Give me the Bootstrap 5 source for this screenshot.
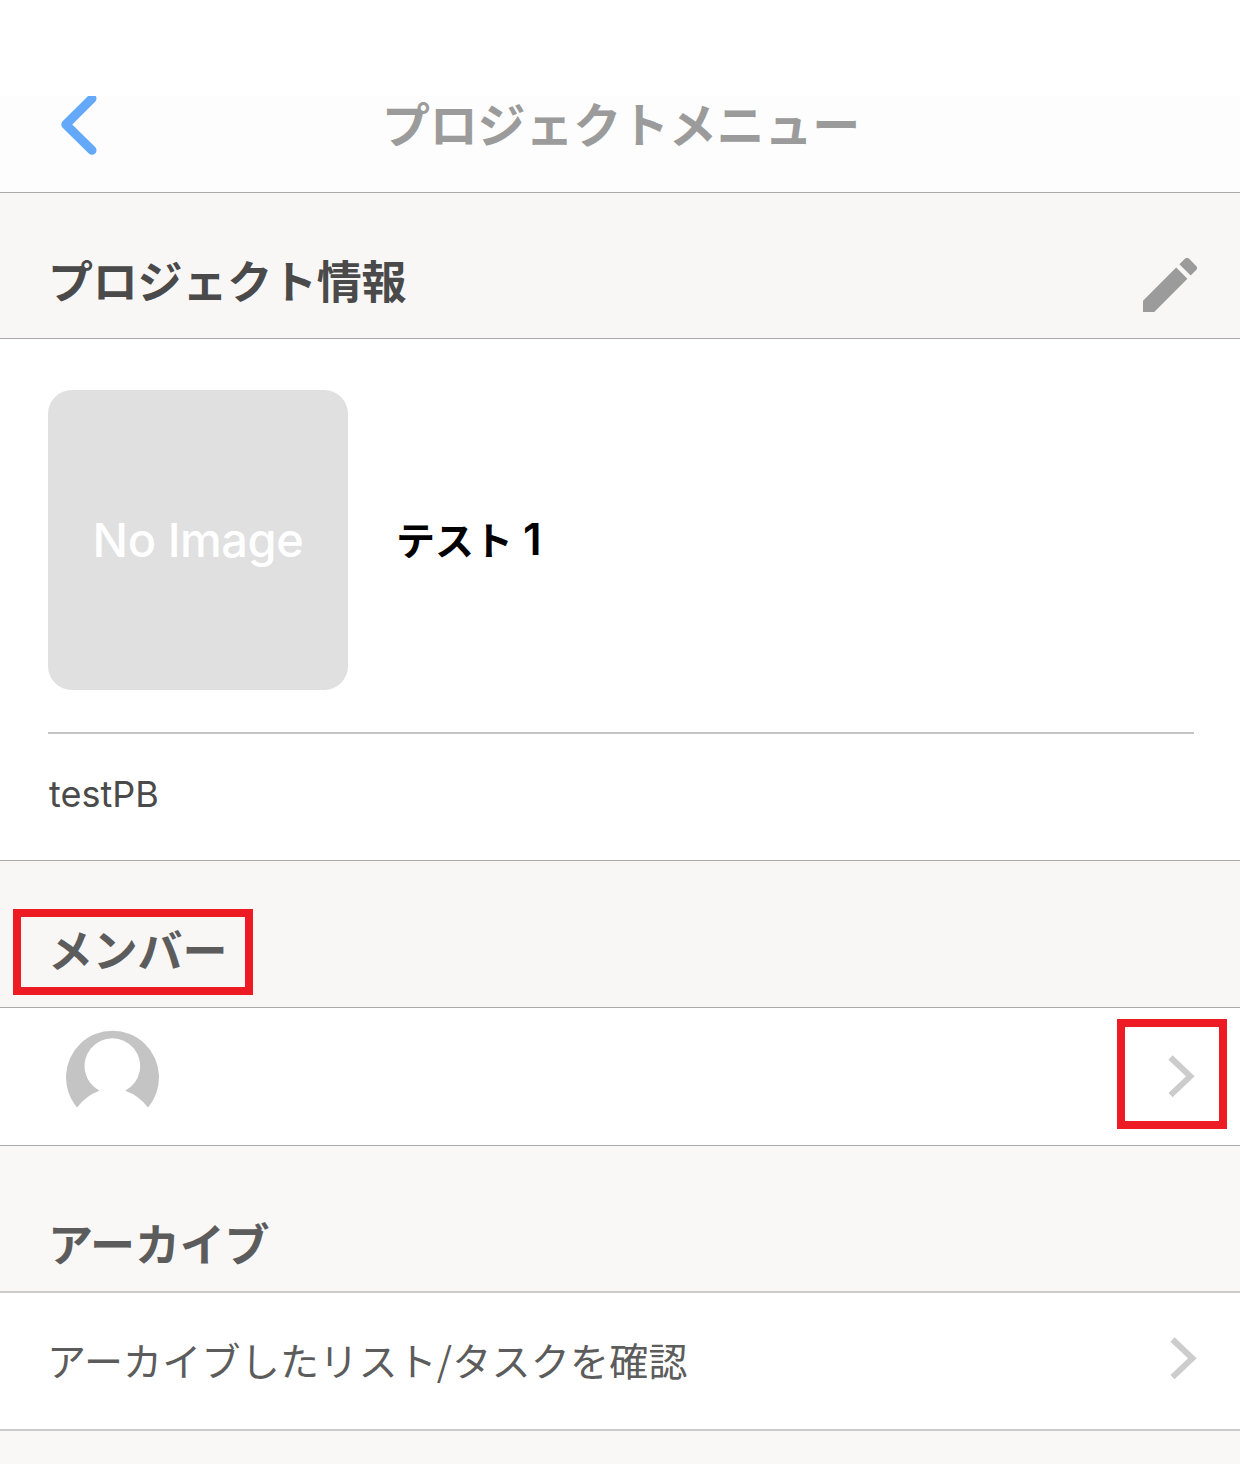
<!DOCTYPE html>
<html lang="ja">
<head>
<meta charset="utf-8">
<meta name="viewport" content="width=device-width, initial-scale=1">
<title>プロジェクトメニュー</title>
<link href="https://cdn.jsdelivr.net/npm/bootstrap@5.3.0/dist/css/bootstrap.min.css" rel="stylesheet">
<style>
body{font-family:"Noto Sans CJK JP",sans-serif;background:#f9f8f7;color:#4a4a4a;min-height:1464px;overflow:hidden}
svg{display:block;flex:none}
.status-gap{height:96px}
.topbar{height:97px;background:#fdfdfd;border-bottom:1px solid #a9a9a9}
.topbar-back,.topbar-end{width:120px;padding-left:60px}
.topbar-title{font-size:48px;line-height:52px;font-weight:700;color:#9b9b9b;letter-spacing:-.2px;padding-left:2px}
.section-head{height:146px;background:#f8f7f6;border-bottom:1px solid #a9a9a9;padding:0 43px 26px 48px}
.section-head h2{font-size:45px;line-height:64px;font-weight:700;margin:0;letter-spacing:-.2px}
.tone{color:#5c5c5c}
.info{height:522px;border-bottom:1px solid #a9a9a9;padding:51px 46px 0 48px}
.thumb{width:300px;height:300px;border-radius:24px;background:#e0e0e0;color:#fff;font:500 47px/60px Inter,sans-serif;letter-spacing:-.45px}
.project-name{font-size:39px;line-height:56px;font-weight:700;color:#000;margin-left:48px;padding-bottom:5px}
.project-name .num{font-family:Inter,sans-serif;font-size:44px;line-height:1;font-weight:600;margin-left:10px}
.rule{height:2px;background:#c4c4c4;margin-top:42px}
.desc{font:400 36px/50px Inter,sans-serif;margin:35px 0 0 1px}
.members{height:147px;padding:48px 0 0 13px}
.callout-label{width:240px;height:86px;border:8px solid #ed1c24;padding:0 0 7px 27px}
.member-row{height:138px;border-bottom:1px solid #a9a9a9;padding:11px 13px 0 66px}
.callout-arrow{width:110px;height:110px;border:8px solid #ed1c24;padding:28px 0 0 43px}
.archive{height:147px;background:#f9f8f7;border-bottom:2px solid #cbcbcb;padding-bottom:16px}
.archive-row{height:138px;border-bottom:2px solid #cbcbcb;padding:0 43px 5px 47px}
.archive-text{font-size:39px;line-height:56px;color:#5c5c5c;letter-spacing:.22px}
</style>
</head>
<body>
<div class="status-gap bg-white"></div>
<header class="topbar d-flex justify-content-between align-items-start">
  <a href="#" class="topbar-back" aria-label="戻る"><svg width="37" height="60" viewBox="0 0 37 60"><path d="M32 2.5 5.8 28.5 32 54.3" fill="none" stroke="#64a8fa" stroke-width="9" stroke-linecap="round" stroke-linejoin="round"/></svg></a>
  <div class="topbar-title text-nowrap">プロジェクトメニュー</div>
  <div class="topbar-end"></div>
</header>
<main>
  <div class="section-head d-flex justify-content-between align-items-end">
    <h2>プロジェクト情報</h2>
    <svg width="54" height="54" viewBox="3 3 18 18" fill="#9b9b9b"><path d="M3 17.25V21h3.75L17.81 9.94l-3.75-3.75L3 17.25zM20.71 7.04a1 1 0 0 0 0-1.41l-2.34-2.34a1 1 0 0 0-1.41 0l-1.83 1.83 3.75 3.75 1.83-1.83z"/></svg>
  </div>
  <section class="info bg-white">
    <div class="d-flex align-items-center">
      <div class="thumb d-flex align-items-center justify-content-center"><span>No Image</span></div>
      <div class="project-name d-flex align-items-baseline">テスト<span class="num">1</span></div>
    </div>
    <div class="rule"></div>
    <div class="desc">testPB</div>
  </section>
  <div class="section-head members d-flex align-items-start">
    <div class="callout-label d-flex align-items-center"><h2 class="tone text-nowrap">メンバー</h2></div>
  </div>
  <div class="member-row bg-white d-flex justify-content-between align-items-start">
    <svg class="mt-2" width="94" height="84" viewBox="0 0 94 84"><path transform="translate(-.3 4.2)" fill="#c4c4c4" d="M11.4 76.2A46.5 46.5 0 1 1 82.2 76.2A48 48 0 0 0 59.5 59.5A27.8 27.8 0 1 0 33.8 59.5A48 48 0 0 0 11.4 76.2Z"/></svg>
    <div class="callout-arrow"><svg width="27" height="43" viewBox="0 0 27 43"><path d="M2.5 2.5 22.3 21.3 2.5 40.2" fill="none" stroke="#ccc" stroke-width="6"/></svg></div>
  </div>
  <div class="section-head archive d-flex align-items-end"><h2 class="tone">アーカイブ</h2></div>
  <a href="#" class="archive-row bg-white d-flex justify-content-between align-items-center text-decoration-none">
    <span class="archive-text">アーカイブしたリスト/タスクを確認</span>
    <svg width="27" height="43" viewBox="0 0 27 43"><path d="M2.5 2.5 22.3 21.3 2.5 40.2" fill="none" stroke="#ccc" stroke-width="6"/></svg>
  </a>
</main>
<script src="https://cdn.jsdelivr.net/npm/bootstrap@5.3.0/dist/js/bootstrap.bundle.min.js"></script>
</body>
</html>
